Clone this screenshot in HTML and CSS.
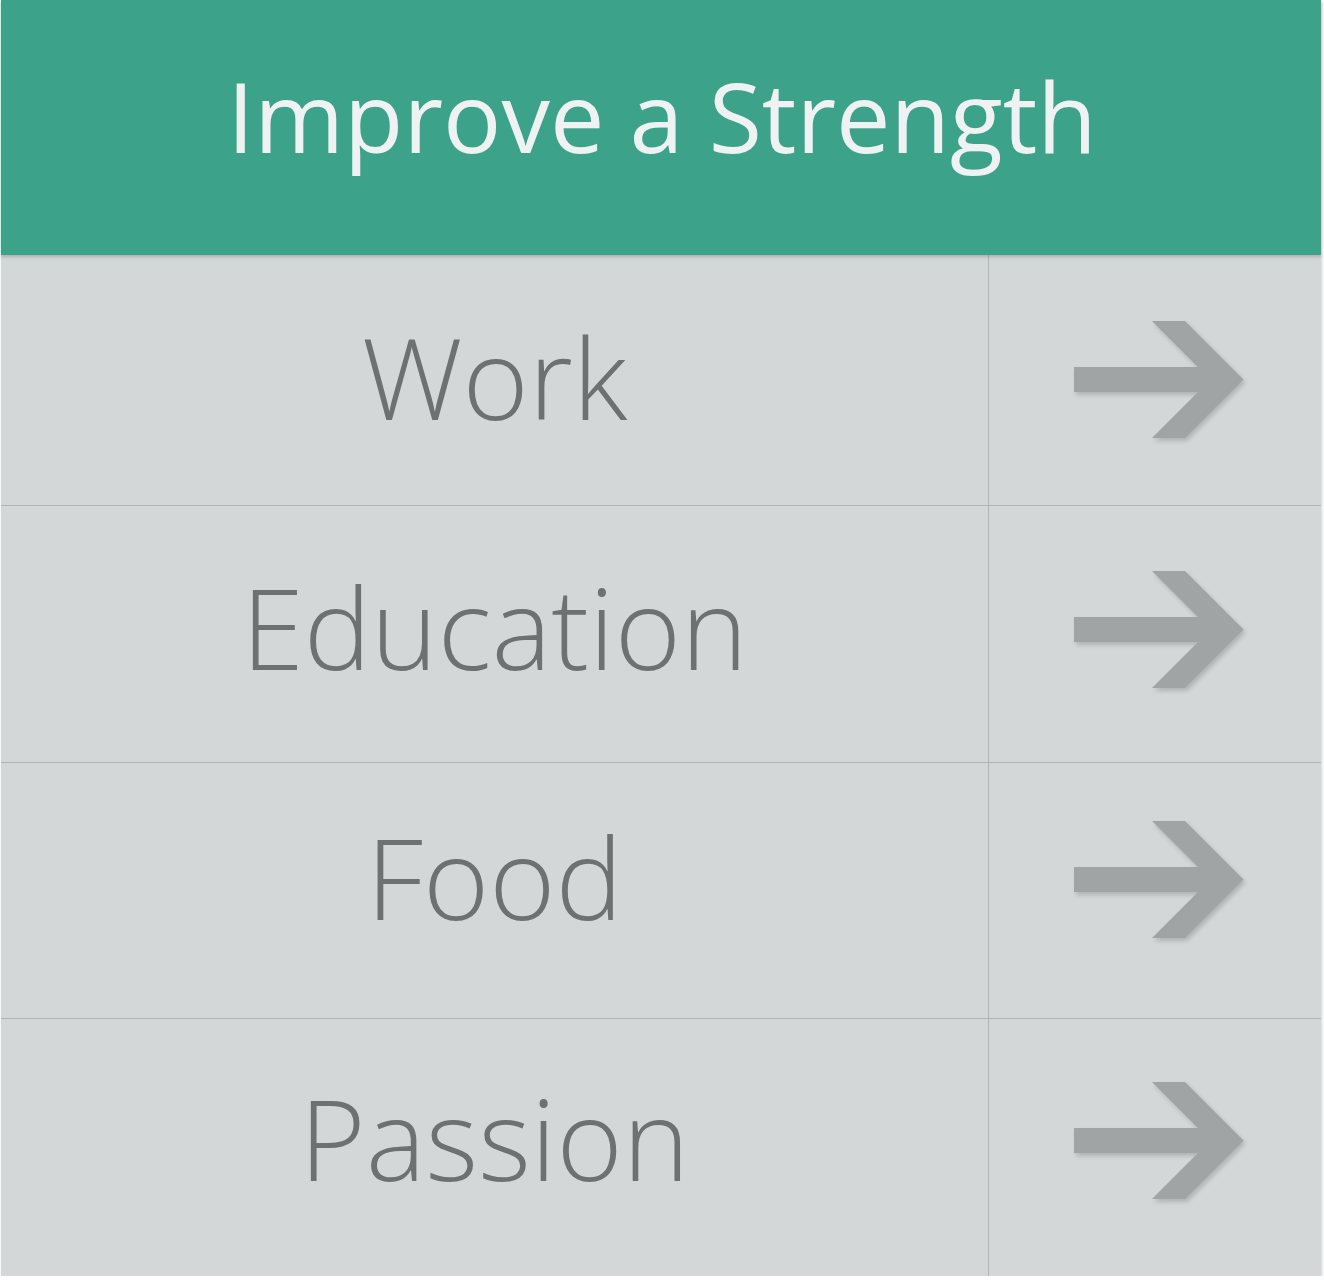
FILE: index.html
```html
<!DOCTYPE html>
<html lang="en">
<head>
<meta charset="utf-8">
<title>Improve a Strength</title>
<link rel="stylesheet" href="styles.css">
</head>
<body>
<div class="card">
  <header class="card-header">
    <h1 class="title">Improve a Strength</h1>
  </header>
  <ul class="list">
    <li class="row row-1">
      <span class="label">Work</span>
      <span class="go"><svg class="arrow" viewBox="0 0 170 118" width="170" height="118"><polygon points="0,46 124,46 78,0 111,0 169.5,58.5 111,117 78,117 124,71 0,71"/></svg></span>
    </li>
    <li class="row row-2">
      <span class="label">Education</span>
      <span class="go"><svg class="arrow" viewBox="0 0 170 118" width="170" height="118"><polygon points="0,46 124,46 78,0 111,0 169.5,58.5 111,117 78,117 124,71 0,71"/></svg></span>
    </li>
    <li class="row row-3">
      <span class="label">Food</span>
      <span class="go"><svg class="arrow" viewBox="0 0 170 118" width="170" height="118"><polygon points="0,46 124,46 78,0 111,0 169.5,58.5 111,117 78,117 124,71 0,71"/></svg></span>
    </li>
    <li class="row row-4">
      <span class="label">Passion</span>
      <span class="go"><svg class="arrow" viewBox="0 0 170 118" width="170" height="118"><polygon points="0,46 124,46 78,0 111,0 169.5,58.5 111,117 78,117 124,71 0,71"/></svg></span>
    </li>
  </ul>
</div>
</body>
</html>
```

FILE: styles.css
```css
* {
  box-sizing: border-box;
}

html, body {
  margin: 0;
  padding: 0;
  background: #ffffff;
}

body {
  font-family: "Open Sans", "Noto Sans", "Liberation Sans", sans-serif;
}

.card {
  margin-left: 1px;
  width: 1320px;
  background: #d3d7d8;
  box-shadow: 1px 1px 3px rgba(0, 0, 0, 0.18);
}

.card-header {
  position: relative;
  z-index: 1;
  height: 255px;
  background: #3da28a;
  display: flex;
  justify-content: center;
  align-items: flex-start;
  padding-top: 65px;
  padding-left: 2px;
  box-shadow: 0 2px 3px rgba(0, 0, 0, 0.18);
}

.title {
  margin: 0;
  font-size: 97px;
  font-weight: 400;
  line-height: 100px;
  color: #eef2f2;
  letter-spacing: 0;
}

.list {
  list-style: none;
  margin: 0;
  padding: 0;
}

.row {
  display: grid;
  grid-template-columns: 988px 1fr;
  border-bottom: 1px solid #b1b4b5;
}

.row-1 { height: 251px; }
.row-2 { height: 257px; }
.row-3 { height: 256px; }
.row-4 { height: 257px; border-bottom: none; }

.label,
.go {
  display: flex;
  align-items: center;
  justify-content: center;
}

.label {
  border-right: 1px solid #b1b4b5;
  font-size: 113px;
  font-weight: 300;
  line-height: 116px;
  color: #6d7171;
  padding-bottom: 8px;
}

.go {
  padding-left: 8px;
}

.row-2 .label, .row-2 .go { padding-bottom: 8px; }
.row-3 .label, .row-3 .go { padding-bottom: 22px; }
.row-4 .label, .row-4 .go { padding-bottom: 14px; }
.row-2 .label { padding-bottom: 16px; }
.row-3 .label { padding-bottom: 30px; }
.row-4 .label { padding-bottom: 22px; }

.arrow {
  display: block;
  fill: #a0a4a5;
  filter: drop-shadow(2px 3px 2px rgba(0, 0, 0, 0.16));
}
```
